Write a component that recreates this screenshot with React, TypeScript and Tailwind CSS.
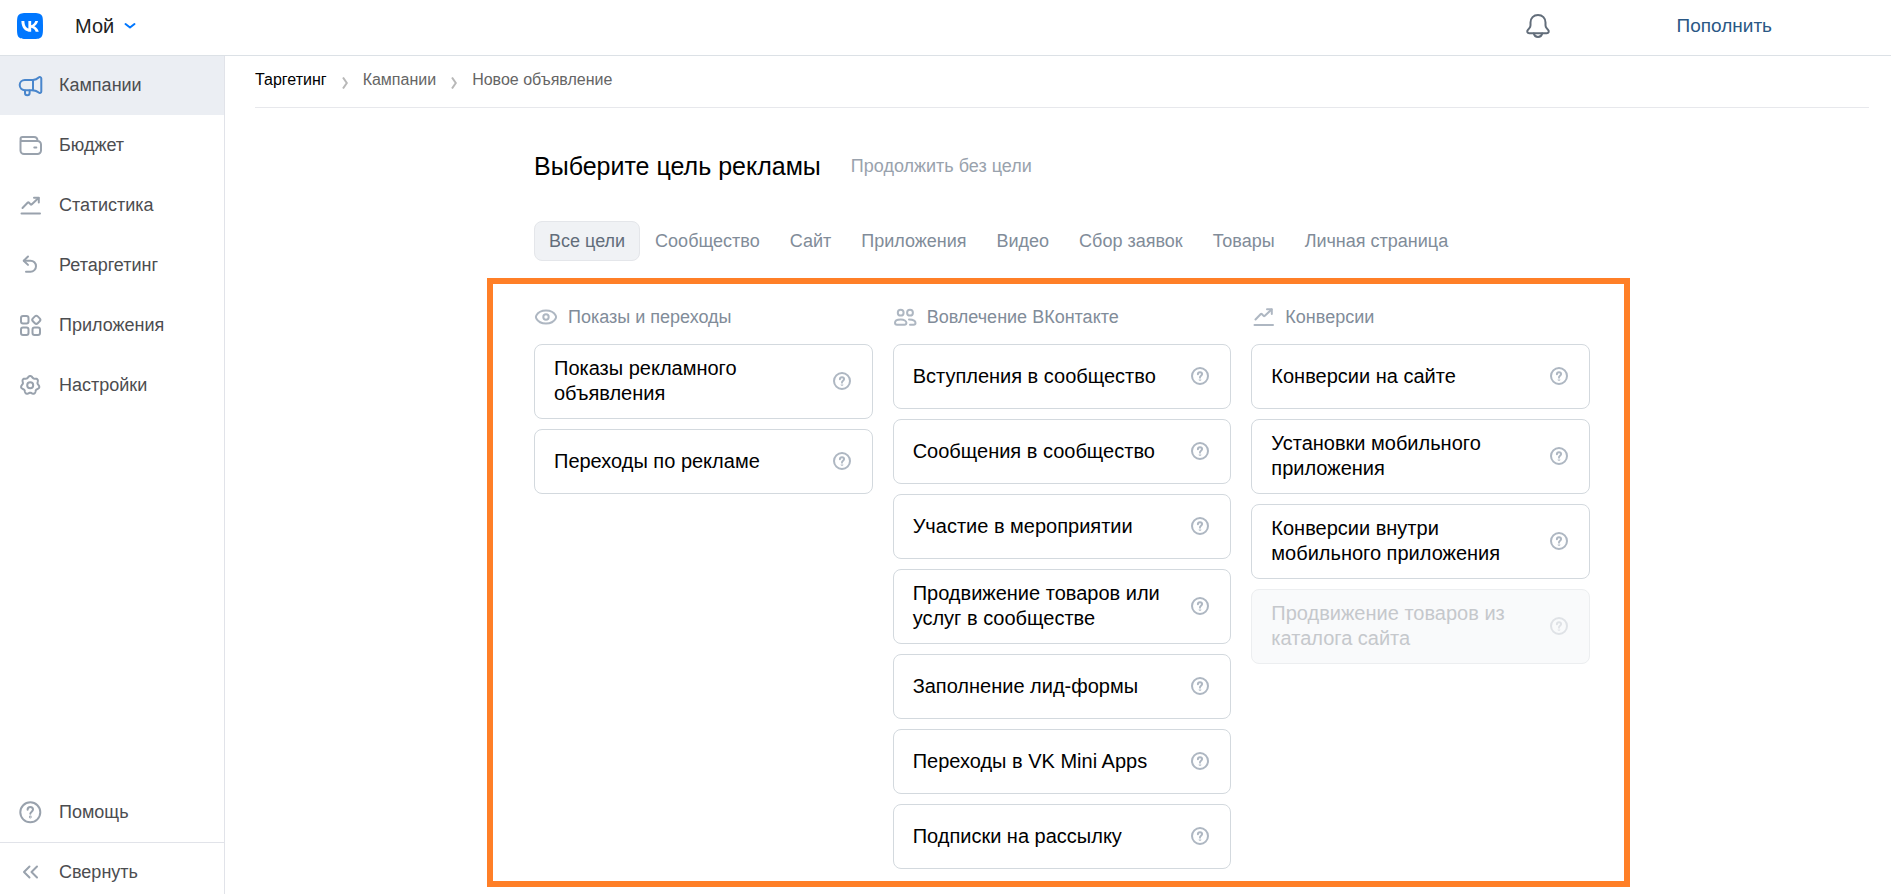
import type { ReactNode } from "react"
import { FaVk } from "react-icons/fa6"
import { cx } from "class-variance-authority"

interface IconProps {
  className?: string
}

function Svg({
  className,
  size = 28,
  children,
}: IconProps & { size?: number; children: ReactNode }) {
  return (
    <svg
      viewBox={`0 0 ${size} ${size}`}
      fill="none"
      stroke="currentColor"
      strokeWidth={2}
      strokeLinecap="round"
      strokeLinejoin="round"
      aria-hidden="true"
      className={cx("shrink-0", className)}
    >
      {children}
    </svg>
  )
}

function MegaphoneIcon({ className }: IconProps) {
  return (
    <Svg className={className}>
      <path d="M17 9H8.800a5 5 0 0 0 0 10.200H17" />
      <path d="M17 9v10.200" />
      <path d="M17 9c2.300-.3 4.200-1.200 5.700-2.600 1-.9 2.600-.3 2.600 1.100v13c0 1.400-1.600 2-2.600 1.100-1.500-1.300-3.400-2.200-5.700-2.400" />
      <path d="M9 19.400v2.600a2.300 2.300 0 0 0 4.600 0v-2.600" />
    </Svg>
  )
}

function WalletIcon({ className }: IconProps) {
  return (
    <Svg className={className}>
      <path d="M4.500 9.500v10a3.500 3.500 0 0 0 3.500 3.500h13.500a3.500 3.500 0 0 0 3.500-3.500v-6a3.500 3.500 0 0 0-3.500-3.500H6.500a2 2 0 0 1-2-2c0-1.200 1-2 2-2h11.500c2 0 3.500 1.500 3.500 4" />
      <path d="M18.300 16.500h2" />
    </Svg>
  )
}

function StatsIcon({ className }: IconProps) {
  return (
    <Svg className={className}>
      <path d="M6.500 17l5.300-5.500c.3-.3.700-.3 1 0l1.800 1.900c.3.300.7.300 1 0L22.500 7" />
      <path d="M18 6.700h4.800v4.800" />
      <path d="M5.500 22.500h18.500" />
    </Svg>
  )
}

function ReturnIcon({ className }: IconProps) {
  return (
    <Svg className={className}>
      <path d="M12 5.500L7.700 9.700l4.300 4.200" />
      <path d="M8 9.700h6.500a5.500 5.500 0 0 1 0 11H10" />
    </Svg>
  )
}

function AppsIcon({ className }: IconProps) {
  return (
    <Svg className={className}>
      <rect x="5" y="5" width="7.500" height="7.500" rx="2" />
      <rect x="5" y="16.500" width="7.500" height="7.500" rx="2" />
      <rect x="16.500" y="16.500" width="7.500" height="7.500" rx="2" />
      <rect x="16.900" y="5.400" width="6.800" height="6.800" rx="2" transform="rotate(45 20.300 8.800)" />
    </Svg>
  )
}

// seven soft lobes around the centre
const gearPoints = Array.from({ length: 98 }, (_, i) => {
  const a = (i / 98) * Math.PI * 2
  const r = 8.4 + 0.9 * Math.cos(7 * a)
  return `${(14.2 + r * Math.sin(a)).toFixed(2)},${(14.2 - r * Math.cos(a)).toFixed(2)}`
}).join(" ")

function GearIcon({ className }: IconProps) {
  return (
    <Svg className={className}>
      <polygon points={gearPoints} />
      <circle cx="14.200" cy="14.200" r="3" />
    </Svg>
  )
}

function HelpIcon({ className }: IconProps) {
  return (
    <Svg className={className}>
      <circle cx="14.300" cy="14.300" r="10" />
      <path d="M11.600 11.700c0-1.600 1.200-2.600 2.700-2.600s2.700 1 2.700 2.500c0 2-2.700 2.200-2.700 4.200" />
      <circle cx="14.300" cy="19" r=".4" />
    </Svg>
  )
}

function CollapseIcon({ className }: IconProps) {
  return (
    <Svg className={className}>
      <path d="M13.500 8.500L8 14l5.500 5.500M21 8.500L15.500 14l5.500 5.500" />
    </Svg>
  )
}

function BellIcon({ className }: IconProps) {
  return (
    <Svg className={className}>
      <path d="M14 3c-4.500 0-7.500 3.300-7.500 7.500v2.800c0 1.300-.4 2.100-1.300 3.100l-1.300 1.500c-1.300 1.500-.6 3.300 1.300 3.300h17.600c1.900 0 2.600-1.800 1.300-3.300l-1.300-1.500c-.9-1-1.300-1.800-1.300-3.100v-2.800C21.500 6.300 18.500 3 14 3z" />
      <path d="M9.800 21.500c.5 2.200 2.200 3.500 4.200 3.500s3.700-1.300 4.200-3.500" />
    </Svg>
  )
}

function EyeIcon({ className }: IconProps) {
  return (
    <Svg size={24} className={className}>
      <path d="M12 5.500c4.800 0 8.200 2.300 9.700 5 .5.900.5 2.100 0 3-1.500 2.700-4.900 5-9.700 5s-8.200-2.300-9.700-5c-.5-.9-.5-2.100 0-3 1.500-2.700 4.900-5 9.700-5z" />
      <circle cx="12" cy="12" r="2.700" />
    </Svg>
  )
}

function UsersIcon({ className }: IconProps) {
  return (
    <Svg size={24} className={className}>
      <circle cx="7.700" cy="7.700" r="2.900" />
      <circle cx="17" cy="7.700" r="2.900" />
      <path d="M7.700 14.500c-3.600 0-5.700 1.600-5.700 3.300 0 1.300.8 1.900 2 1.900h7.400c1.200 0 2-.6 2-1.900 0-1.700-2.100-3.300-5.700-3.300z" />
      <path d="M16 14.500c4 0 6.500 1.400 6.500 3.500 0 1.100-.7 1.700-1.900 1.700H17" />
    </Svg>
  )
}

function GrowthIcon({ className }: IconProps) {
  return (
    <Svg size={24} className={className}>
      <path d="M4.500 14.500l5.300-5.500c.3-.3.700-.3 1 0l1.800 1.900c.3.300.7.300 1 0L20.500 4.500" />
      <path d="M16 4.200h4.800V9" />
      <path d="M3.500 20h18.500" />
    </Svg>
  )
}

function HintIcon({ className }: IconProps) {
  return (
    <Svg size={20} className={className}>
      <circle cx="10" cy="10" r="8" />
      <path d="M7.900 8.300c0-1.300.9-2.100 2.100-2.100s2.100.8 2.100 1.900c0 1.600-2.100 1.700-2.100 3.200" />
      <circle cx="10" cy="13.800" r=".3" />
    </Svg>
  )
}

const menu = [
  { label: "Кампании", icon: MegaphoneIcon, active: true },
  { label: "Бюджет", icon: WalletIcon },
  { label: "Статистика", icon: StatsIcon },
  { label: "Ретаргетинг", icon: ReturnIcon },
  { label: "Приложения", icon: AppsIcon },
  { label: "Настройки", icon: GearIcon },
]

const tabs = [
  "Все цели",
  "Сообщество",
  "Сайт",
  "Приложения",
  "Видео",
  "Сбор заявок",
  "Товары",
  "Личная страница",
]

interface Goal {
  title: string
  disabled?: boolean
}

const columns: { title: string; icon: (p: IconProps) => ReactNode; goals: Goal[] }[] = [
  {
    title: "Показы и переходы",
    icon: EyeIcon,
    goals: [{ title: "Показы рекламного объявления" }, { title: "Переходы по рекламе" }],
  },
  {
    title: "Вовлечение ВКонтакте",
    icon: UsersIcon,
    goals: [
      { title: "Вступления в сообщество" },
      { title: "Сообщения в сообщество" },
      { title: "Участие в мероприятии" },
      { title: "Продвижение товаров или услуг в сообществе" },
      { title: "Заполнение лид-формы" },
      { title: "Переходы в VK Mini Apps" },
      { title: "Подписки на рассылку" },
    ],
  },
  {
    title: "Конверсии",
    icon: GrowthIcon,
    goals: [
      { title: "Конверсии на сайте" },
      { title: "Установки мобильного приложения" },
      { title: "Конверсии внутри мобильного приложения" },
      { title: "Продвижение товаров из каталога сайта", disabled: true },
    ],
  },
]

function Header() {
  return (
    <header className="relative z-10 flex h-[55px] items-center bg-white pr-[119px] pb-1 pl-[17px] shadow-[0_1px_0_#dce1e6]">
      <a href="#" aria-label="ВКонтакте">
        <FaVk className="h-[30px] w-[26px] text-[#0077ff]" />
      </a>
      <button className="ml-8 flex cursor-pointer items-center gap-[10px] text-[20px] leading-6 text-[#222]">
        Мой
        <svg viewBox="0 0 12 8" fill="none" stroke="#0077ff" strokeWidth="2" strokeLinecap="round" strokeLinejoin="round" className="h-2 w-3">
          <path d="M1.500 2L6 5.500 10.500 2" />
        </svg>
      </button>
      <button aria-label="Уведомления" className="ml-auto cursor-pointer text-[#626d7a]">
        <BellIcon className="size-7" />
      </button>
      <a href="#" className="ml-[125px] text-[19px] leading-6 text-[#2a5885]">
        Пополнить
      </a>
    </header>
  )
}

function Sidebar() {
  return (
    <aside className="flex w-[225px] shrink-0 flex-col border-r border-[#e1e3e9] text-[18px] leading-6 text-[#4c4d50]">
      <nav>
        {menu.map(({ label, icon: Icon, active }) => (
          <a
            key={label}
            href="#"
            className={cx("flex h-[60px] items-center gap-[15px] pl-4", active && "bg-[#ebeef3]")}
          >
            <Icon className={cx("size-7", active ? "text-[#4986cc]" : "text-[#99a2ad]")} />
            {label}
          </a>
        ))}
      </nav>
      <a href="#" className="mt-auto flex h-[60px] items-center gap-[15px] pl-4">
        <HelpIcon className="size-7 text-[#99a2ad]" />
        Помощь
      </a>
      <button className="flex h-[52px] cursor-pointer items-center gap-[15px] border-t border-[#e1e3e9] pt-[6px] pl-4">
        <CollapseIcon className="size-7 text-[#99a2ad]" />
        Свернуть
      </button>
    </aside>
  )
}

function CrumbArrow() {
  return (
    <svg viewBox="0 0 6 12" fill="none" stroke="#b8b8b8" strokeWidth="2" className="mt-[6px] h-3 w-[6px]">
      <path d="M1 .500L4.800 6 1 11.500" />
    </svg>
  )
}

function GoalCard({ title, disabled }: Goal) {
  return (
    <button
      disabled={disabled}
      className={cx(
        "flex min-h-[65px] items-center justify-between gap-2 rounded-lg border pt-[11px] pr-5 pb-3 pl-[19px] text-left text-[20px] leading-[25px]",
        disabled
          ? "border-[#eceef0] bg-[#f9fafb] text-[#c5c8cc]"
          : "cursor-pointer border-[#d3d9de] bg-white text-black"
      )}
    >
      {title}
      <HintIcon className={cx("size-5", disabled ? "text-[#dfe2e6]" : "text-[#aeb7c2]")} />
    </button>
  )
}

export default function App() {
  return (
    <div className="flex min-h-screen flex-col bg-white font-['Liberation_Sans',Arial,sans-serif]">
      <Header />
      <div className="flex grow">
        <Sidebar />
        <main className="min-w-0 grow pr-[22px] pl-[30px]">
          <nav className="flex h-[53px] items-center gap-[15px] border-b border-[#e7e8ec] pb-[2px] text-[16px] leading-5 text-[#656565]">
            <a href="#" className="text-black">
              Таргетинг
            </a>
            <CrumbArrow />
            <a href="#">Кампании</a>
            <CrumbArrow />
            <span>Новое объявление</span>
          </nav>

          <div className="mx-auto max-w-[1056px]">
            <div className="mt-[42px] flex items-center gap-[30px]">
              <h1 className="text-[25px] leading-8 text-black">Выберите цель рекламы</h1>
              <button className="cursor-pointer text-[18px] leading-6 text-[#99a2ad]">
                Продолжить без цели
              </button>
            </div>

            <div className="mt-[39px] flex">
              {tabs.map((tab, i) => (
                <button
                  key={tab}
                  className={cx(
                    "h-10 cursor-pointer rounded-lg border px-[14px] text-[18px] leading-6 whitespace-nowrap",
                    i === 0
                      ? "border-[#e4e6ea] bg-[#f0f2f5] text-[#626d7a]"
                      : "border-transparent text-[#818c99]"
                  )}
                >
                  {tab}
                </button>
              ))}
            </div>

            <section className="mt-[17px] mr-[-40px] mb-[7px] ml-[-47px] grid grid-cols-3 gap-5 border-6 border-[#ff7f27] pt-[21px] pr-[34px] pb-3 pl-[41px]">
              {columns.map(({ title, icon: Icon, goals }) => (
                <div key={title} className="flex flex-col gap-[10px]">
                  <h2 className="mb-[5px] flex h-6 items-center gap-[10px] text-[18px] leading-6 text-[#818c99]">
                    <Icon className="size-6 text-[#aeb7c2]" />
                    {title}
                  </h2>
                  {goals.map((goal) => (
                    <GoalCard key={goal.title} {...goal} />
                  ))}
                </div>
              ))}
            </section>
          </div>
        </main>
      </div>
    </div>
  )
}
